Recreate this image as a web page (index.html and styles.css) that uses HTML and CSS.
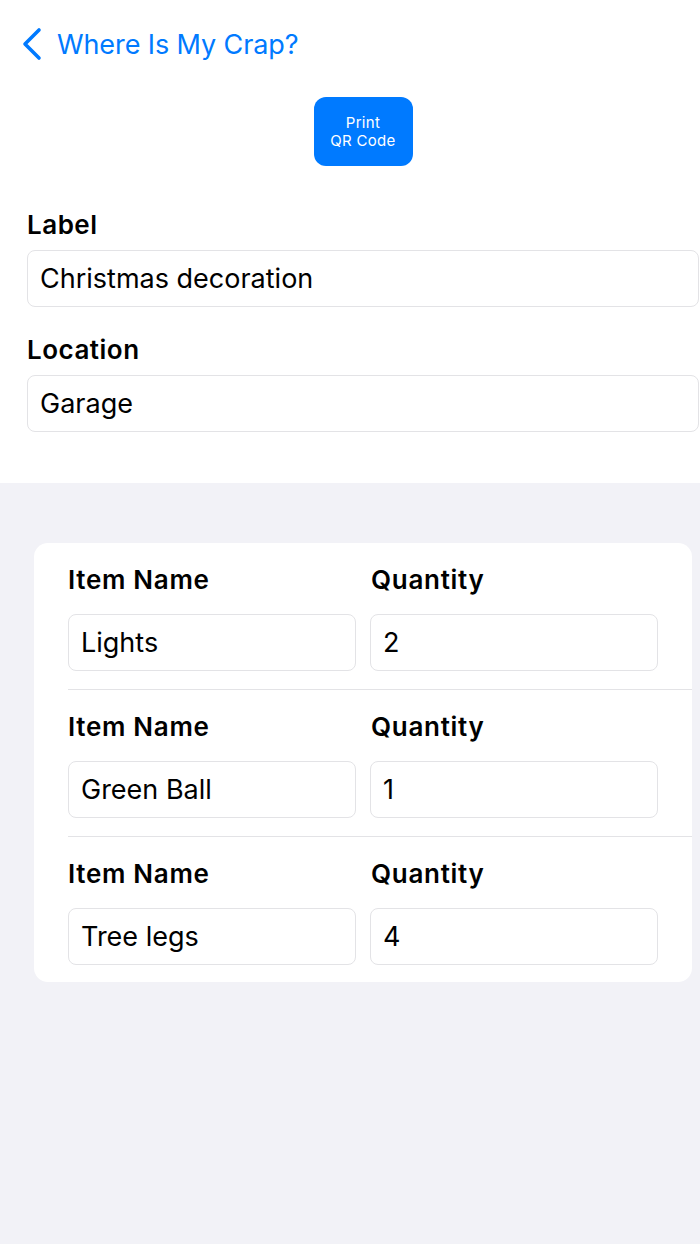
FILE: index.html
```html
<!DOCTYPE html>
<html lang="en">
<head>
  <meta charset="UTF-8">
  <title>Box Detail</title>
  <link rel="stylesheet" href="styles.css">
</head>
<body>
  <div class="nav">
    <svg class="back" width="22" height="34" viewBox="0 0 22 34">
      <polyline points="18,3 4,17 18,31" fill="none" stroke="#007aff" stroke-width="3.6" stroke-linecap="round" stroke-linejoin="round"/>
    </svg>
    <span class="nav-title">Where Is My Crap?</span>
  </div>

  <div class="top">
    <div class="print-wrap">
      <button class="print">Print<br>QR Code</button>
    </div>

    <div class="field-label">Label</div>
    <div class="field">Christmas decoration</div>

    <div class="field-label second">Location</div>
    <div class="field">Garage</div>
  </div>

  <div class="bottom">
    <div class="card">
      <div class="item-row">
        <div class="col-label">Item Name</div>
        <div class="col-label">Quantity</div>
        <div class="small-field">Lights</div>
        <div class="small-field">2</div>
      </div>
      <div class="item-row">
        <div class="col-label">Item Name</div>
        <div class="col-label">Quantity</div>
        <div class="small-field">Green Ball</div>
        <div class="small-field">1</div>
      </div>
      <div class="item-row last">
        <div class="col-label">Item Name</div>
        <div class="col-label">Quantity</div>
        <div class="small-field">Tree legs</div>
        <div class="small-field">4</div>
      </div>
    </div>
  </div>
</body>
</html>
```

FILE: styles.css
```css
body {
  font-family: Inter, "Noto Sans", sans-serif;
  margin: 0;
  background-color: #f2f2f7;
  color: #000;
}
.nav {
  display: flex;
  align-items: center;
  height: 88px;
  padding-left: 21px;
  background: white;
}
.back {
  margin-right: 14px;
}
.nav-title {
  color: #007aff;
  font-size: 27px;
  letter-spacing: -0.1px;
}
.top {
  background: white;
  padding: 9px 1px 51px 27px;
}
.print-wrap {
  display: flex;
  justify-content: center;
  margin-bottom: 44px;
}
.print {
  width: 99px;
  height: 69px;
  border: none;
  border-radius: 12px;
  background-color: #007aff;
  color: white;
  font-family: inherit;
  font-size: 15px;
  line-height: 18px;
  letter-spacing: 0.3px;
  padding: 0;
}
.field-label {
  font-size: 26px;
  font-weight: 600;
  line-height: 30px;
  margin-bottom: 10px;
  letter-spacing: 0.5px;
}
.field-label.second {
  margin-top: 28px;
}
.field {
  height: 55px;
  border: 1px solid #e3e3e6;
  border-radius: 8px;
  padding-left: 12px;
  display: flex;
  align-items: center;
  font-size: 27px;
  margin-top: 1px;
}
.bottom {
  padding: 60px 8px 260px 34px;
}
.card {
  background: white;
  border-radius: 14px;
  padding: 22px 0 17px 34px;
}
.item-row {
  display: grid;
  grid-template-columns: 288px 288px;
  column-gap: 14px;
  row-gap: 19px;
  padding-bottom: 18px;
  margin-bottom: 22px;
  border-bottom: 1px solid #e3e3e6;
}
.item-row.last {
  border-bottom: none;
  padding-bottom: 0;
  margin-bottom: 0;
}
.col-label {
  font-size: 26px;
  font-weight: 600;
  line-height: 30px;
  letter-spacing: 0.7px;
}
.col-label + .col-label {
  padding-left: 1px;
}
.small-field {
  height: 55px;
  border: 1px solid #e3e3e6;
  border-radius: 8px;
  padding-left: 12px;
  display: flex;
  align-items: center;
  font-size: 27px;
}
```
